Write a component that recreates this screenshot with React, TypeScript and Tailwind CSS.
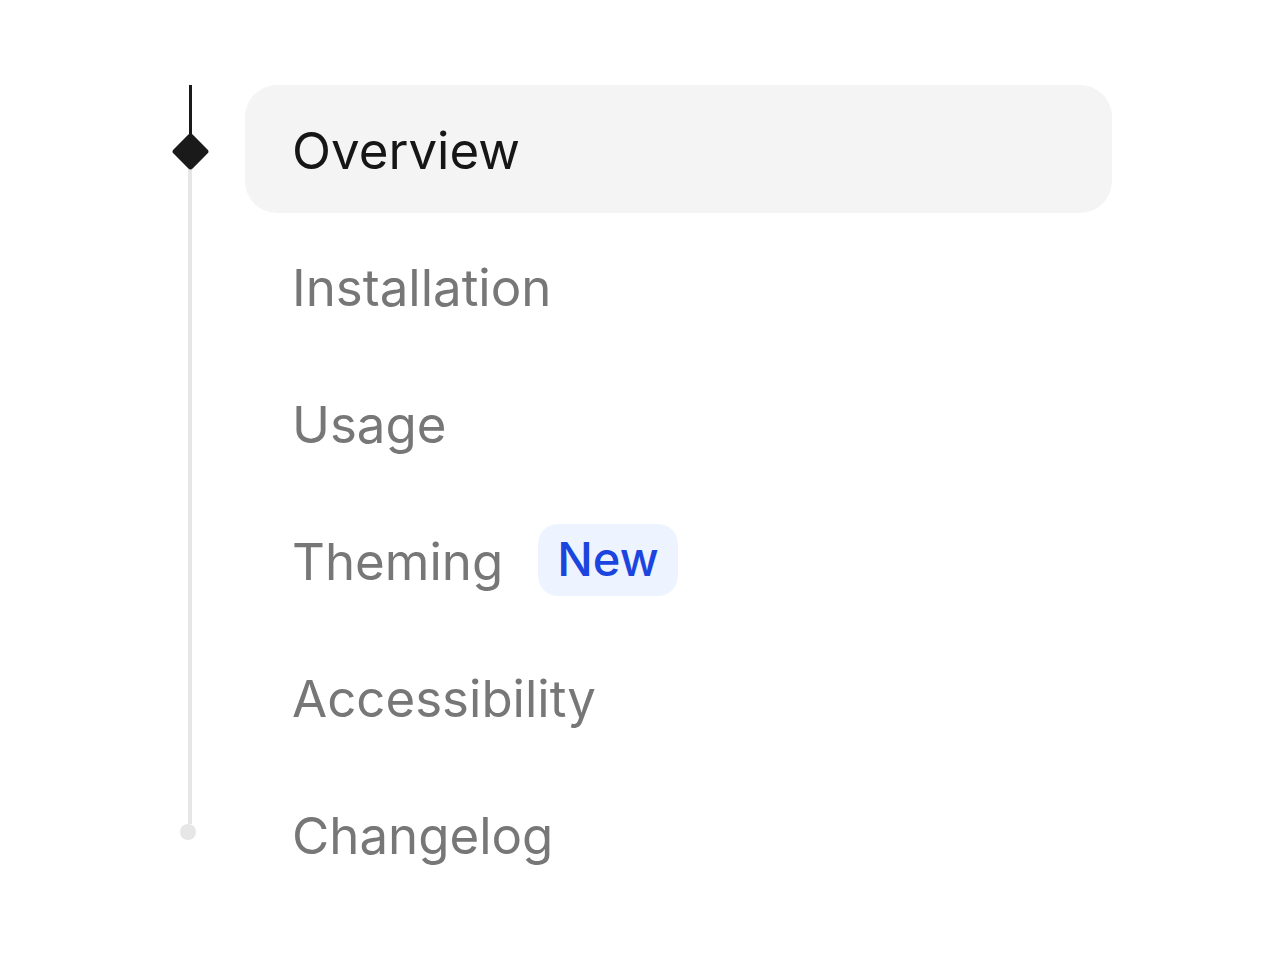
import React from 'react';

interface NavItem {
  label: string;
  badge?: string;
}

const items: NavItem[] = [
  { label: 'Overview' },
  { label: 'Installation' },
  { label: 'Usage' },
  { label: 'Theming', badge: 'New' },
  { label: 'Accessibility' },
  { label: 'Changelog' },
];

export default function App() {
  const active = 0;

  return (
    <main
      className="min-h-[960px] w-full bg-white pl-[170px] pt-[80px]"
      style={{ fontFamily: 'Inter, "Noto Sans", sans-serif' }}
    >
      <ul className="flex flex-col">
        {items.map((item, i) => {
          const isActive = i === active;
          const isLast = i === items.length - 1;
          return (
            <li key={item.label} className="flex h-[137px] items-center">
              {/* rail */}
              <div className="flex h-full w-[40px] flex-col items-center">
                {isActive ? (
                  <>
                    <div className="mt-[5px] w-[3px] flex-1 bg-[#1a1a1a]" />
                    <div className="my-[-5px] h-[27px] w-[27px] rotate-45 rounded-[3px] bg-[#1a1a1a]" />
                    <div className="w-[4px] flex-1 bg-[#e6e6e6]" />
                  </>
                ) : isLast ? (
                  <>
                    <div className="w-[4px] flex-1 bg-[#e6e6e6]" />
                    <div className="-ml-[4px] mb-[3px] h-[16px] w-[16px] rounded-full bg-[#e6e6e6]" />
                    <div className="flex-1" />
                  </>
                ) : (
                  <div className="w-[4px] flex-1 bg-[#e6e6e6]" />
                )}
              </div>

              {/* item */}
              <a
                href="#"
                className={
                  'ml-[35px] flex h-[128px] w-[867px] items-center rounded-[32px] pl-[47px] text-[51px] ' +
                  (isActive ? 'bg-[#f4f4f4] text-[#161616]' : 'text-[#777777]')
                }
              >
                <span className="mt-[5px]">{item.label}</span>
                {item.badge && (
                  <span className="ml-[35px] flex h-[72px] items-center rounded-[20px] bg-[#eef4ff] px-[19px] text-[47px] font-medium text-[#1b45de]">
                    {item.badge}
                  </span>
                )}
              </a>
            </li>
          );
        })}
      </ul>
    </main>
  );
}
